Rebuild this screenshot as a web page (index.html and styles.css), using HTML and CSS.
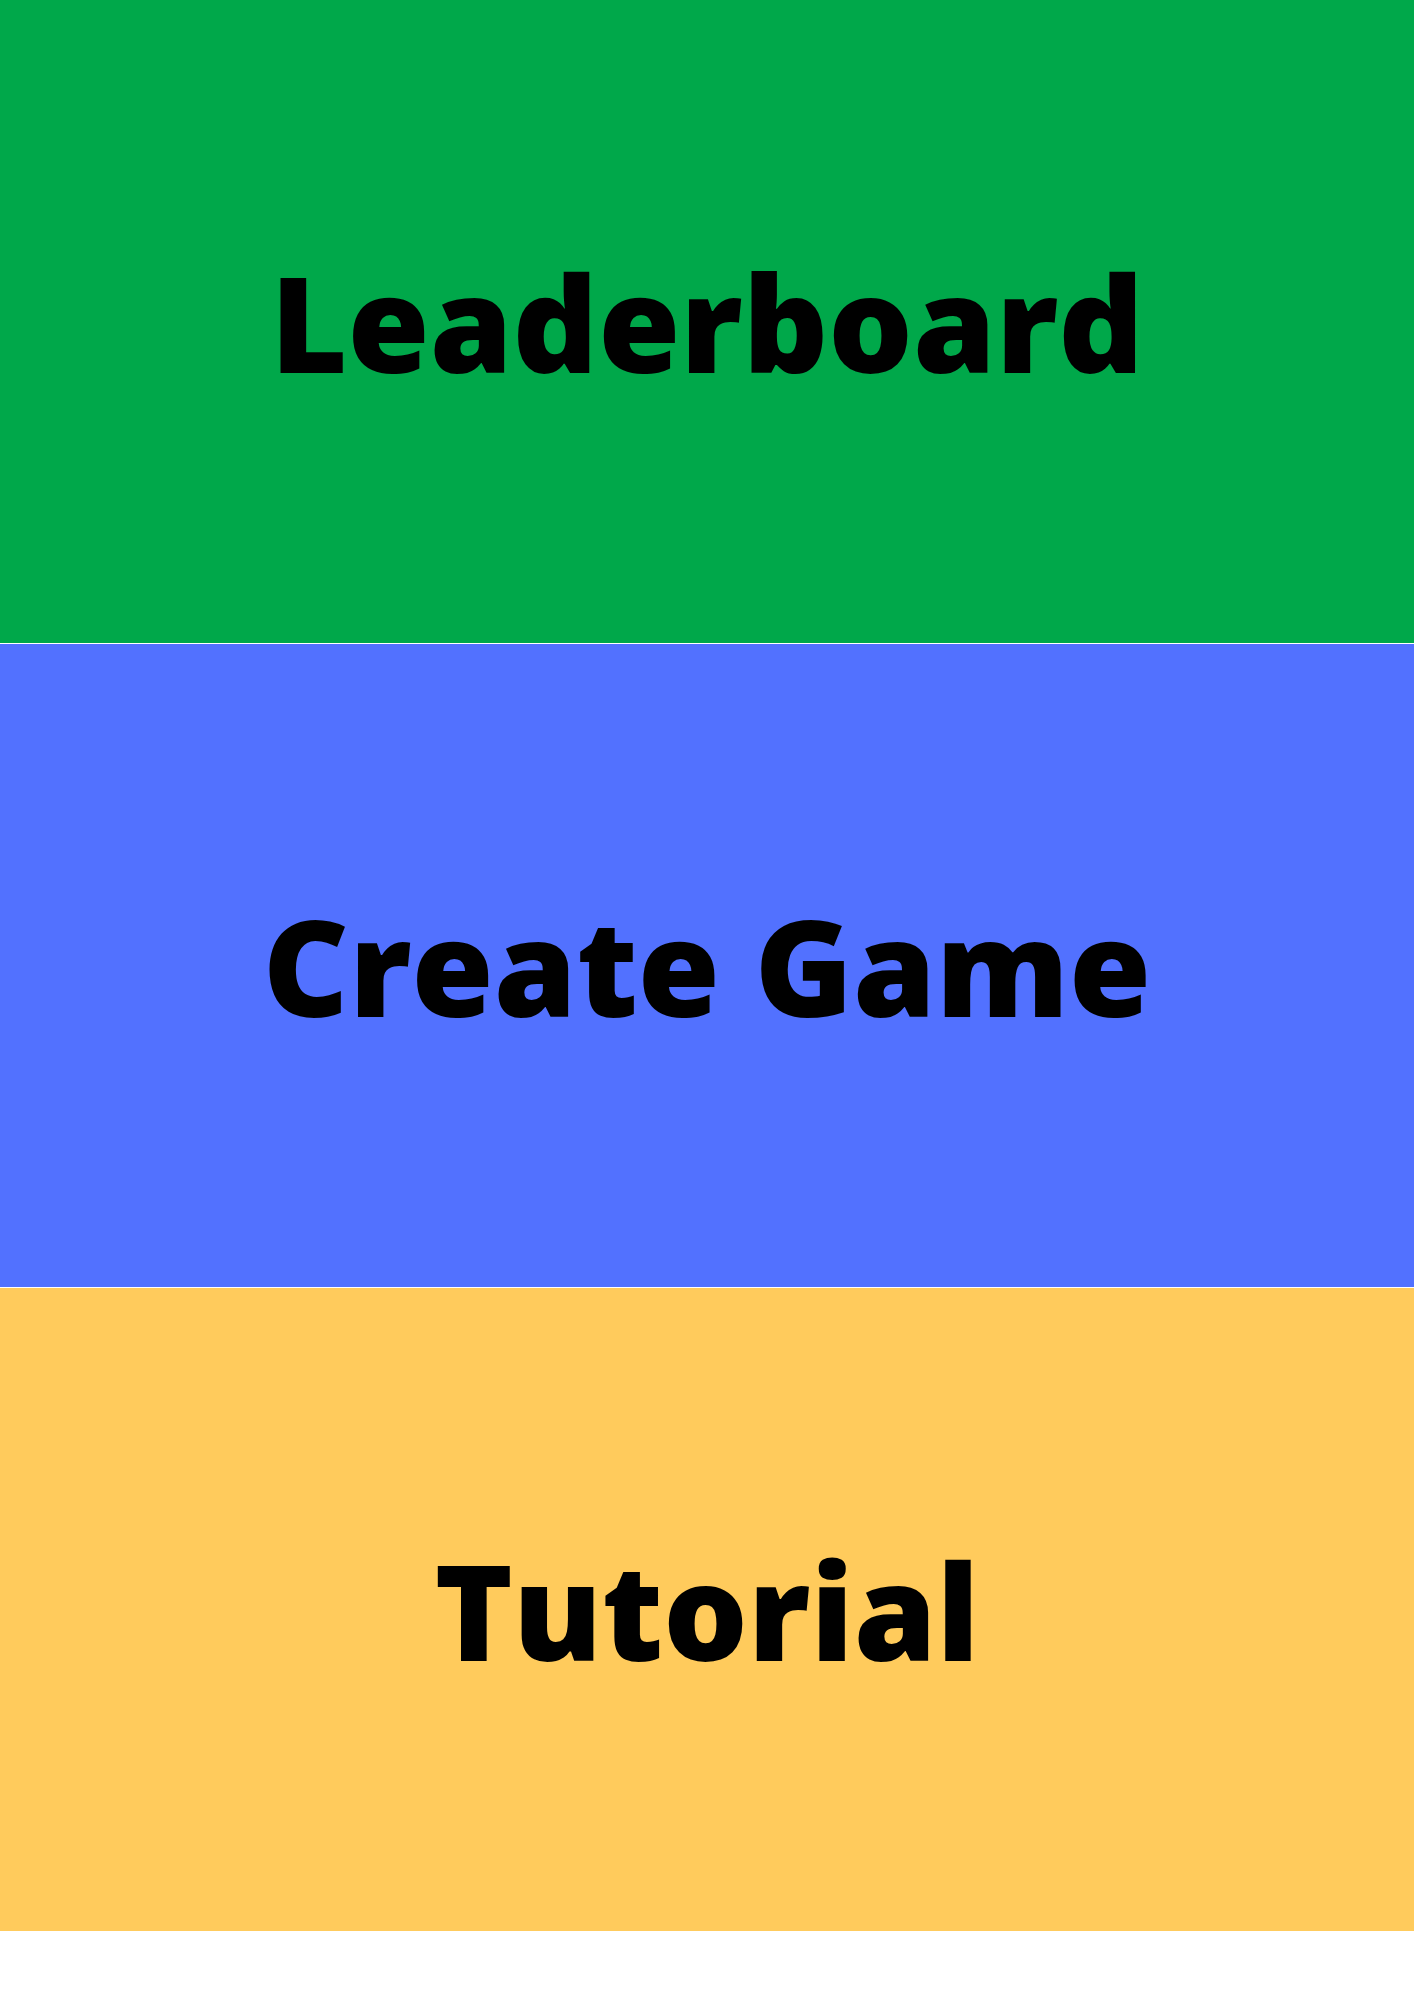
FILE: index.html
```html
<!DOCTYPE html>
<html>
<head>
<meta charset="utf-8">
<link rel="stylesheet" href="styles.css">
</head>
<body>
<main class="menu">
  <section class="tile tile-green"><h1 class="label">Leaderboard</h1></section>
  <section class="tile tile-blue"><h1 class="label">Create Game</h1></section>
  <section class="tile tile-yellow"><h1 class="label">Tutorial</h1></section>
</main>
</body>
</html>
```
FILE: styles.css
```css
html, body {
  margin: 0;
  padding: 0;
  background: #ffffff;
}
.menu {
  display: flex;
  flex-direction: column;
  gap: 1px;
  width: 1414px;
}
.tile {
  height: 643px;
  display: flex;
  align-items: center;
  justify-content: center;
}
.tile-green { background: #00a84a; }
.tile-blue { background: #5271ff; }
.tile-yellow { background: #ffcb5c; }
.label {
  margin: 0;
  font-family: "Open Sans", "Liberation Sans", sans-serif;
  font-weight: 800;
  font-size: 133px;
  line-height: 1;
  color: #000000;
}
```
